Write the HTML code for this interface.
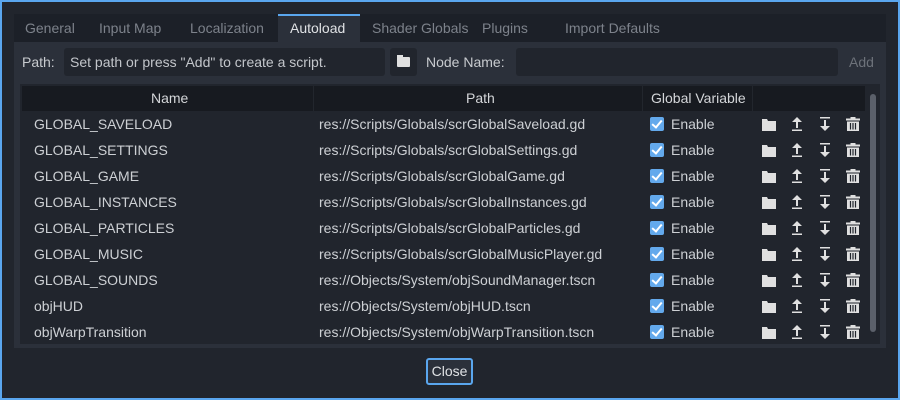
<html><head><style>
body{margin:0;width:900px;height:400px;background:#5aa6ee;font-family:"Liberation Sans",sans-serif;font-size:14px;overflow:hidden}
.win{position:absolute;left:2px;top:2px;width:896px;height:396px;background:#21252d}
.a{position:absolute}
.tabs{left:14px;top:14px;width:872px;height:28px;background:#1c2028}
.tab{position:absolute;top:14px;height:28px;line-height:28px;color:#7d828b;font-size:14px}
.body{left:14px;top:42px;width:872px;height:306px;background:#2b303a}
.inp{background:#21252d;border-radius:3px;height:28px;line-height:28px;color:#c3c6cb}
.tbl{left:20px;top:84px;width:860px;height:260px;background:#21252d}
.hdr{left:22px;top:86px;width:843px;height:25px;background:#171a20;color:#d4d6d9;line-height:25px}
.row{position:absolute;left:0;width:900px;height:26px;line-height:26px;color:#cdd0d4}
.row span{position:absolute}
.cb{position:absolute;left:650px;top:6px;width:14px;height:14px;background:#63a9ec;border-radius:2px}
.cb:after{content:"";position:absolute;left:4px;top:1px;width:4px;height:8px;border:solid #fff;border-width:0 2px 2px 0;transform:rotate(40deg)}
svg{position:absolute;top:4px}
</style></head><body><div class="win"></div>
<div class="a tabs"></div>
<div class="a" style="left:278px;top:14px;width:82px;height:28px;background:#2b303a;border-top:2px solid #5aa6ee;box-sizing:border-box"></div>
<div class="tab" style="left:25px">General</div>
<div class="tab" style="left:99px">Input Map</div>
<div class="tab" style="left:190px">Localization</div>
<div class="tab" style="left:290px;color:#e0e2e5">Autoload</div>
<div class="tab" style="left:372px">Shader Globals</div>
<div class="tab" style="left:482px">Plugins</div>
<div class="tab" style="left:565px">Import Defaults</div>
<div class="a body"></div>
<div class="a" style="left:22px;top:48px;line-height:28px;color:#c8cbcf">Path:</div>
<div class="a inp" style="left:64px;top:48px;width:321px;padding-left:6px;box-sizing:border-box">Set path or press "Add" to create a script.</div>
<div class="a inp" style="left:390px;top:48px;width:27px"><div class="a" style="left:7px;top:9px;width:13px;height:10px;background:#e0e0e0;border-radius:1px"></div><div class="a" style="left:7px;top:7px;width:6px;height:3px;background:#e0e0e0"></div></div>
<div class="a" style="left:426px;top:48px;line-height:28px;color:#c8cbcf">Node Name:</div>
<div class="a inp" style="left:516px;top:48px;width:322px"></div>
<div class="a" style="left:849px;top:48px;line-height:28px;color:#6d727a">Add</div>
<div class="a tbl"></div>
<div class="a hdr"><span class="a" style="left:129px">Name</span><span class="a" style="left:444px">Path</span><span class="a" style="left:629px">Global Variable</span>
<div class="a" style="left:291px;top:0;width:1px;height:25px;background:#22262d"></div><div class="a" style="left:620px;top:0;width:1px;height:25px;background:#22262d"></div><div class="a" style="left:730px;top:0;width:1px;height:25px;background:#22262d"></div></div>
<div class="a" style="left:870px;top:94px;width:6px;height:238px;background:#5b606a;border-radius:3px"></div>
<div id="rows"></div>
<div class="a" style="left:426px;top:358px;width:47px;height:27px;box-sizing:border-box;border:2px solid #5aa6ee;border-radius:3px;background:#2b303a;color:#e0e2e5;text-align:center;line-height:23px">Close</div>
<script>
var d=[["GLOBAL_SAVELOAD","res://Scripts/Globals/scrGlobalSaveload.gd"],["GLOBAL_SETTINGS","res://Scripts/Globals/scrGlobalSettings.gd"],["GLOBAL_GAME","res://Scripts/Globals/scrGlobalGame.gd"],["GLOBAL_INSTANCES","res://Scripts/Globals/scrGlobalInstances.gd"],["GLOBAL_PARTICLES","res://Scripts/Globals/scrGlobalParticles.gd"],["GLOBAL_MUSIC","res://Scripts/Globals/scrGlobalMusicPlayer.gd"],["GLOBAL_SOUNDS","res://Objects/System/objSoundManager.tscn"],["objHUD","res://Objects/System/objHUD.tscn"],["objWarpTransition","res://Objects/System/objWarpTransition.tscn"]];
var h="";d.forEach(function(r,i){h+='<div class="row" style="top:'+(111+i*26)+'px"><span style="left:34px">'+r[0]+'</span><span style="left:319px">'+r[1]+'</span><div class="cb"></div><span style="left:671px">Enable</span>'+
'<svg style="left:760px" width="18" height="18"><path d="M2 4h5l1 2h8v10H2z" fill="#e0e0e0"/></svg>'+
'<svg style="left:788px" width="18" height="18"><path d="M9 2l5 5h-4v6H8V7H4z M4 14.5h10V16H4z" fill="#e0e0e0"/></svg>'+
'<svg style="left:816px" width="18" height="18"><path d="M9 16l5-5h-4V5H8v6H4z M4 2h10v1.5H4z" fill="#e0e0e0"/></svg>'+
'<svg style="left:844px" width="18" height="18"><path d="M2 3.5h14v2H2z M6.5 2h5v1.5h-5z M3 6.5h12V16H3z" fill="#e0e0e0"/><path d="M6.5 8v6.5M9 8v6.5M11.5 8v6.5" stroke="#21252d" stroke-width="1.2"/></svg></div>'});
document.getElementById("rows").innerHTML=h;
</script>
</body></html>
